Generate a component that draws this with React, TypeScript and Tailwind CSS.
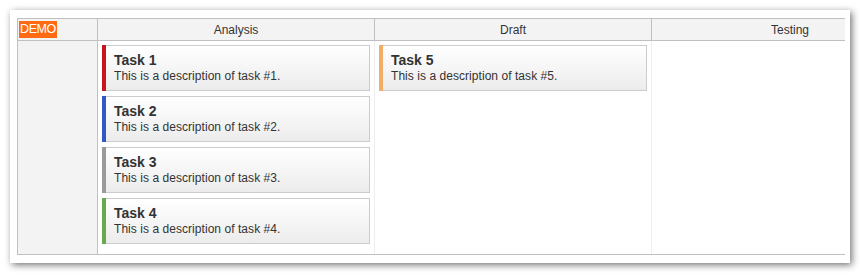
import React from "react";

const tasks = [
  { id: 1, color: "bg-[#c8161d]" },
  { id: 2, color: "bg-[#3158c4]" },
  { id: 3, color: "bg-[#9a9a9a]" },
  { id: 4, color: "bg-[#6aa84f]" },
];

function Card({ id, color }: { id: number; color: string }) {
  return (
    <div className="flex h-[46px] border border-[#cccccc] bg-gradient-to-b from-white to-[#ececec]">
      <div className={`w-[4px] -my-px -ml-px ${color}`} />
      <div className="pl-[8px] pt-[6px] leading-none">
        <div className="text-[14px] leading-[17px] font-bold text-[#333333]">Task {id}</div>
        <div className="text-[12px] leading-[15px] text-[#333333] tracking-[0.05px]">
          This is a description of task #{id}.
        </div>
      </div>
    </div>
  );
}

export default function App() {
  return (
    <div
      className="w-[860px] h-[276px] bg-white p-[10px]"
      style={{ fontFamily: '"Liberation Sans", Arial, sans-serif' }}
    >
      <div className="w-[840px] h-[253px] bg-white shadow-[2px_2px_7px_rgba(0,0,0,0.55)] pl-[7px] pt-[8px]">
        <div className="w-[828px] overflow-hidden border-l border-t border-b border-[#c0c0c0]">
          <div className="w-[1000px]">
            <div className="flex h-[22px] bg-[#f3f3f3] border-b border-[#c0c0c0] text-[12px] text-[#333333]">
              <div className="w-[80px] border-r border-[#c0c0c0] pl-[1px] pt-[1px]">
                <span className="inline-block bg-[#ff6a13] text-white px-[1px] h-[17px] leading-[17px] text-[12.5px] tracking-[-0.4px]">
                  DEMO
                </span>
              </div>
              <div className="w-[277px] border-r border-[#c0c0c0] flex items-center justify-center">Analysis</div>
              <div className="w-[277px] border-r border-[#c0c0c0] flex items-center justify-center">Draft</div>
              <div className="w-[277px] border-r border-[#c0c0c0] flex items-center justify-center">Testing</div>
            </div>
            <div className="flex h-[213px]">
              <div className="w-[80px] bg-[#f3f3f3] border-r border-[#c0c0c0]" />
              <div className="w-[277px] border-r border-[#eeeeee] px-[4px] pt-[4px] flex flex-col gap-[5px]">
                {tasks.map((t) => (
                  <Card key={t.id} id={t.id} color={t.color} />
                ))}
              </div>
              <div className="w-[277px] border-r border-[#eeeeee] px-[4px] pt-[4px] flex flex-col gap-[5px]">
                <Card id={5} color="bg-[#f2ae67]" />
              </div>
              <div className="w-[277px]" />
            </div>
          </div>
        </div>
      </div>
    </div>
  );
}
